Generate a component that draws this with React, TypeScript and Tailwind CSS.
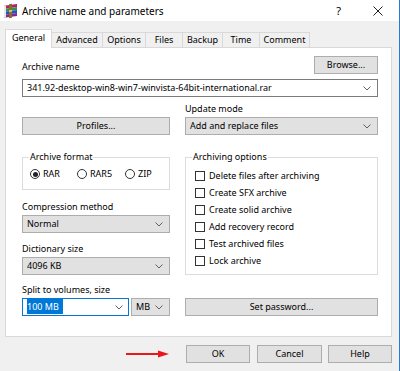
import type { ReactNode } from 'react'

function Chevron({ className = '' }: { className?: string }) {
  return (
    <svg width="8" height="5" viewBox="0 0 8 5" className={className}>
      <polyline points="0.5,0.5 4,4 7.5,0.5" fill="none" stroke="#606060" strokeWidth="1" />
    </svg>
  )
}

function Btn({ children, className = '' }: { children: ReactNode; className?: string }) {
  return (
    <div className={'h-[18px] border border-[#adadad] bg-[#e1e1e1] flex items-center justify-center ' + className}>
      {children}
    </div>
  )
}

function Select({ value, className = '' }: { value: string; className?: string }) {
  return (
    <div className={'h-[18px] border border-[#adadad] bg-[#e1e1e1] flex items-center pl-[4px] pr-[6px] ' + className}>
      <span className="flex-1 truncate">{value}</span>
      <Chevron />
    </div>
  )
}

function Radio({ label, checked = false, className = '' }: { label: string; checked?: boolean; className?: string }) {
  return (
    <div className={'flex items-center gap-[3px] ' + className}>
      <span className="w-[10px] h-[10px] rounded-full border border-[#333] bg-white flex items-center justify-center">
        {checked && <span className="w-[5px] h-[5px] rounded-full bg-[#222]" />}
      </span>
      <span>{label}</span>
    </div>
  )
}

function Check({ label }: { label: string }) {
  return (
    <div className="h-[17px] flex items-center gap-[4px] ml-[3px]">
      <span className="w-[10px] h-[10px] border border-[#333] bg-white" />
      <span>{label}</span>
    </div>
  )
}

function RarIcon() {
  return (
    <svg width="16" height="16" viewBox="0 0 16 16">
      <g transform="skewY(-8) translate(0 2)">
        <rect x="1" y="1" width="13" height="3" fill="#b3206e" />
        <rect x="1" y="4" width="13" height="3" fill="#2f9a3c" />
        <rect x="1" y="7" width="13" height="3" fill="#2453c4" />
        <rect x="1" y="10" width="13" height="3" fill="#7d2b93" />
        <rect x="1" y="1" width="2" height="12" fill="#e8e8e8" />
        <rect x="6" y="0" width="3" height="14" fill="#8b6a2e" />
        <rect x="6" y="6" width="3" height="2" fill="#d9c27a" />
      </g>
    </svg>
  )
}

const tabs = [
  { name: 'General', w: 'w-[47px]' },
  { name: 'Advanced', w: 'w-[51px]' },
  { name: 'Options', w: 'w-[43px]' },
  { name: 'Files', w: 'w-[37px]' },
  { name: 'Backup', w: 'w-[40px]' },
  { name: 'Time', w: 'w-[37px]' },
  { name: 'Comment', w: 'w-[50px]' },
]

const options = [
  'Delete files after archiving',
  'Create SFX archive',
  'Create solid archive',
  'Add recovery record',
  'Test archived files',
  'Lock archive',
]

export default function App() {
  return (
    <div className="w-[400px] h-[371px] bg-[#f0f0f0] border-r border-[#2a7bd0] overflow-hidden font-['Noto_Sans',sans-serif] text-[9px] leading-[12px] text-black">
      {/* title bar */}
      <div className="h-[21px] bg-white flex items-center">
        <div className="ml-[3px] mt-[1px]">
          <RarIcon />
        </div>
        <span className="ml-[3px] text-[10px]">Archive name and parameters</span>
        <span className="ml-auto text-[11px] mr-[32px]">?</span>
        <svg width="10" height="10" viewBox="0 0 10 10" className="mr-[16px]">
          <path d="M0.5 0.5 L9.5 9.5 M9.5 0.5 L0.5 9.5" stroke="#222" strokeWidth="1" />
        </svg>
      </div>

      {/* tabs */}
      <div className="mt-[8px] pl-[5px] flex items-end h-[18px]">
        {tabs.map((t, i) =>
          i === 0 ? (
            <div key={t.name} className={'relative z-10 h-[19px] -mb-px bg-white border border-b-0 border-[#d9d9d9] flex items-center justify-center pb-[2px] ' + t.w}>
              {t.name}
            </div>
          ) : (
            <div key={t.name} className={'h-[15px] border border-b-0 border-l-0 border-[#d9d9d9] flex items-center justify-center ' + t.w}>
              {t.name}
            </div>
          )
        )}
      </div>

      {/* panel */}
      <div className="ml-[5px] w-[387px] h-[290px] bg-white border border-[#d9d9d9] pl-[16px] pr-[13px]">
        <div className="mt-[8px] flex items-end justify-between">
          <span className="mb-[1px]">Archive name</span>
          <Btn className="w-[64px] h-[17px]">Browse...</Btn>
        </div>
        <div className="mt-[5px] h-[18px] border border-[#7a7a7a] bg-white flex items-center pl-[4px] pr-[6px]">
          <span className="flex-1">341.92-desktop-win8-win7-winvista-64bit-international.rar</span>
          <Chevron />
        </div>

        <div className="mt-[6px] flex gap-[15px] items-end">
          <Btn className="w-[148px]">Profiles...</Btn>
          <div className="flex-1">
            <div>Update mode</div>
            <Select value="Add and replace files" className="mt-[2px]" />
          </div>
        </div>

        <div className="mt-[16px] flex gap-[15px] items-start">
          <div className="w-[148px]">
            <fieldset className="border border-[#dcdcdc] pl-[6px] pt-[5px] pb-[9px]">
              <legend className="px-[1px]">Archive format</legend>
              <div className="flex ml-[1px]">
                <Radio label="RAR" checked className="w-[47px]" />
                <Radio label="RAR5" className="w-[48px]" />
                <Radio label="ZIP" />
              </div>
            </fieldset>
            <div className="mt-[11px]">Compression method</div>
            <Select value="Normal" className="mt-[2px]" />
            <div className="mt-[10px]">Dictionary size</div>
            <Select value="4096 KB" className="mt-[2px]" />
          </div>
          <fieldset className="flex-1 border border-[#dcdcdc] pl-[6px] pt-[4px] pb-[5px]">
            <legend className="px-[1px]">Archiving options</legend>
            {options.map(o => (
              <Check key={o} label={o} />
            ))}
          </fieldset>
        </div>

        <div className="mt-[9px] flex gap-[15px] items-end">
          <div className="w-[148px]">
            <div>Split to volumes, size</div>
            <div className="mt-[2px] flex gap-[2px]">
              <div className="w-[107px] h-[18px] border border-[#0078d7] bg-white flex items-center pl-[4px] pr-[5px]">
                <span className="flex-1">
                  <span className="bg-[#0078d7] text-white pr-[4px] py-[1px]">100 MB</span>
                </span>
                <Chevron />
              </div>
              <Select value="MB" className="flex-1" />
            </div>
          </div>
          <Btn className="flex-1">Set password...</Btn>
        </div>
      </div>

      {/* buttons */}
      <div className="mt-[8px] flex items-center justify-end pr-[7px]">
        <svg width="44" height="8" viewBox="0 0 44 8" className="mr-[16px]">
          <path d="M0 4 L34 4" stroke="#e8171b" strokeWidth="2" />
          <path d="M32 0.5 L43 4 L32 7.5 Z" fill="#e8171b" />
        </svg>
        <Btn className="w-[64px] border-[#0078d7]">OK</Btn>
        <Btn className="w-[65px] ml-[7px]">Cancel</Btn>
        <Btn className="w-[64px] ml-[6px]">Help</Btn>
      </div>
    </div>
  )
}
